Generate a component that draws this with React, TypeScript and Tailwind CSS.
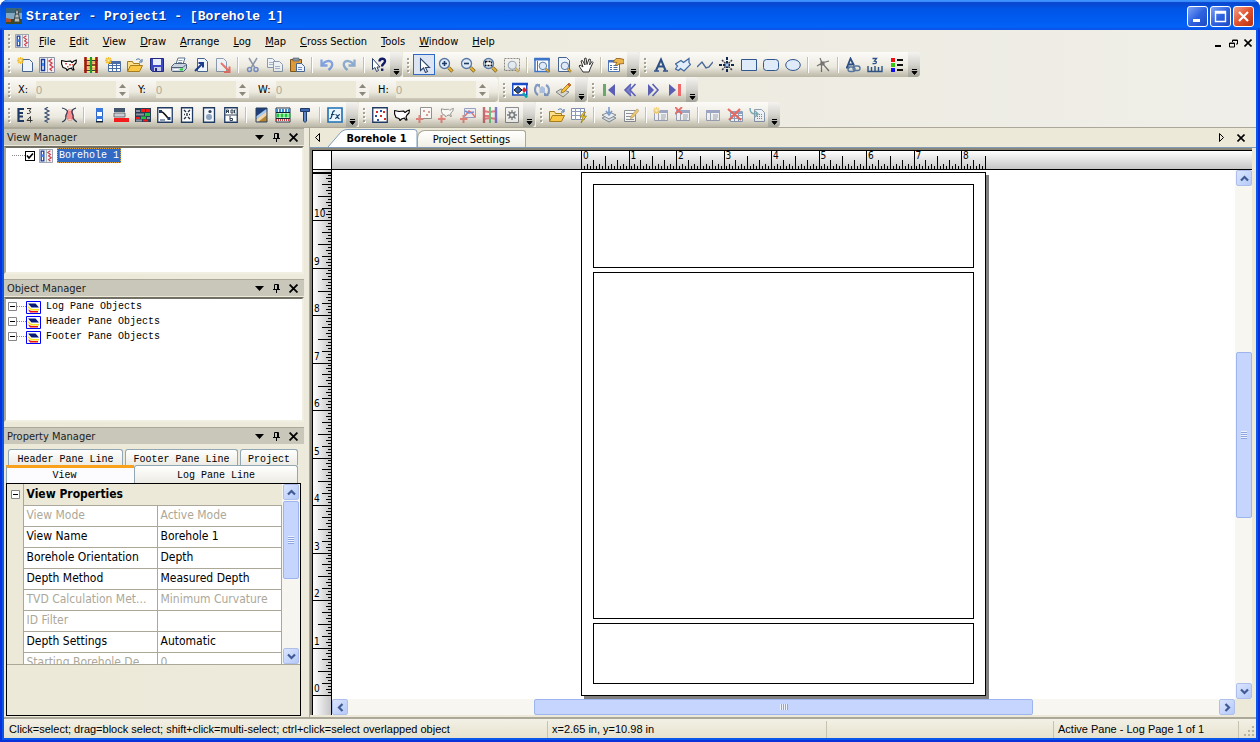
import type { ReactNode } from "react";
import clsx from "clsx";

const NAVY = "#1f3a63";

// pieces shared by several toolbar drawings
const Sheet = ({ x = 3, y = 1, w = 10, h = 13 }) => (
  <path
    d={`M${x}.5 ${y}.5h${w - 3}l3 3v${h - 3}h-${w}z`}
    fill="#eef4fc"
    stroke="#46648f"
  />
);
const Lens = ({ children }: { children?: ReactNode }) => (
  <>
    <path d="M10.5 10.5l4 4" stroke="#8a6a1c" strokeWidth="3.4" />
    <path d="M10.5 10.5l3.6 3.6" stroke="#e9b53b" strokeWidth="1.8" />
    <circle cx="6.5" cy="6.5" r="5" fill="#dfeaf6" stroke="#5878a4" strokeWidth="1.3" />
    {children}
  </>
);
const States = ({ stroke = "#000" }) => (
  <path
    d="M.6 3.5L5 4.500 9.500 4 11 5.500 13 4 15.400 3 15 6 13 8 12 10 13 13H11.500L10.500 11 7.500 12 6 13.500 5 11.500 2 10.500.6 7z"
    fill="#fff"
    stroke={stroke}
    strokeWidth="1.100"
    strokeLinejoin="round"
  />
);
const Plus = () => <path d="M3.500 8v8M0 12h7.500" stroke="#d8463e" strokeWidth="2" />;
const Spark = () => (
  <>
    <path d="M3.500 0v7M0 3.500h7M1 1l5 5M6 1l-5 5" stroke="#f3bd2d" strokeWidth="1.300" />
    <path d="M2.500 2.500h2v2h-2z" fill="#fff3a8" />
  </>
);
const Grid = () => (
  <>
    <path d="M3.500 4.500h12v10h-12z" fill="#fff" stroke="#4a6da5" />
    <path d="M3 6h13" stroke="#4a6da5" strokeWidth="2" />
    <path d="M3 8.500h13M3 11.500h13M7.500 5v10M11.500 5v10" stroke="#4a6da5" />
  </>
);
const Form = () => (
  <>
    <path d="M1.500 3.500h13v10h-13z" fill="#f4f4fa" stroke="#66739a" />
    <path d="M1 4.500h14" stroke="#6674ab" strokeWidth="3" />
    <path d="M5.500 6v8M8 8h5M8 10h5M8 12h4" stroke="#6b7894" />
  </>
);
const Folder = () => (
  <>
    <path d="M.5 14V4.500h5l1 2h6v3" fill="#fbe089" stroke="#a67c1c" />
    <path d="M.5 14.500l3-6h12l-3 6z" fill="#f9c744" stroke="#a67c1c" />
    <path d="M9 3c2-2 4-1 5 1m1-2v3h-3" fill="none" stroke="#3f6ca4" />
  </>
);
const Fence = () => (
  <>
    <path d="M1 1h14v14H1z" fill="#fff27a" />
    <path d="M3 4l4 1 7-1.500v2.500L7 7 3 6.500zM3 11l4-1 7 1v2l-7-1-4 1z" fill="#f2a06c" />
    <path d="M3 8.500h4M9 8h4" stroke="#7a1410" strokeWidth="1.500" />
    <path d="M1 3.500h14M1 13.500h14" stroke="#3a3a3a" />
    <path d="M2.500 0v16M13.500 0v16" stroke="#a01a16" strokeWidth="2.600" />
    <path d="M8 0v16" stroke="#1d9a2e" strokeWidth="2.200" />
  </>
);
const Frame = ({ stroke = NAVY }) => (
  <path d="M.75.75h14.500v14.500H.75z" fill="#fff" stroke={stroke} strokeWidth="1.300" />
);

const icons: Record<string, ReactNode> = {
  new: (
    <>
      <Sheet x={5} y={2} w={10} h={12} />
      <Spark />
    </>
  ),
  borehole: (
    <>
      <path d="M.5.5h15v15H.5z" fill="#f2f2f4" stroke="#8b93a4" />
      <path d="M2.500 2.500h3v11h-3z" fill="#fff" stroke="#163d9a" strokeWidth="1.500" />
      <path d="M3 6h2v3H3z" fill="#4b8af0" />
      <path d="M8.500 1v14" stroke="#9aa" />
      <path d="M13 2l-3 2 3 2-2 2 3 2-3 2 2 2" fill="none" stroke="#d33c4c" strokeWidth="1.300" />
    </>
  ),
  map: (
    <>
      <States />
      <path d="M4 6h2v1.500H4zM8 7h2v1.500H8zM6 9h1.500v1.500H6zM11 7h1.500v1.500H11z" fill="#e4564a" />
    </>
  ),
  section: <Fence />,
  newTable: (
    <>
      <Grid />
      <Spark />
    </>
  ),
  open: <Folder />,
  save: (
    <>
      <path d="M1.500 1.500h13v13h-11l-2-2z" fill="#3d49c4" stroke="#20297e" />
      <path d="M4 2h8v6H4z" fill="#e8eefb" />
      <path d="M5 10h7v4H5z" fill="#c9cdea" />
      <path d="M6 11h2v3H6z" fill="#20297e" />
    </>
  ),
  print: (
    <>
      <path d="M5 7l2-6h7l-2 6z" fill="#fff" stroke="#5b7291" />
      <path d="M7.500 3.500h4M7 5.500h4" stroke="#8797ad" />
      <path d="M.5 9.500l3-3h11l1 1v4l-3 3H1.500l-1-1z" fill="#c9d2de" stroke="#4e5f78" />
      <path d="M1 10.500h11l3-3" fill="none" stroke="#4e5f78" />
      <path d="M9 11.500h3v2H9z" fill="#32cc3c" />
      <path d="M2.500 12.500h5" stroke="#fff" />
    </>
  ),
  import: (
    <>
      <Sheet x={4} />
      <path d="M2 14l7-7M5.500 6h4.500v4.500" fill="none" stroke="#1d3c8a" strokeWidth="2" />
    </>
  ),
  export: (
    <>
      <Sheet x={1} />
      <path d="M6 6l8 8M14.500 9.500V15H9" fill="none" stroke="#e0281e" strokeWidth="2" />
    </>
  ),
  cut: (
    <>
      <path d="M4 1l6 10M12 1L6 11" stroke="#4a5c7c" strokeWidth="1.500" />
      <circle cx="4.500" cy="12.500" r="2" fill="none" stroke="#2f57b4" strokeWidth="1.500" />
      <circle cx="11" cy="12.500" r="2" fill="none" stroke="#2f57b4" strokeWidth="1.500" />
    </>
  ),
  copy: (
    <>
      <Sheet x={0} y={1} w={8} h={9} />
      <Sheet x={6} y={4} w={9} h={10} />
      <path d="M2 5.500h4M2 7.500h4M8 9.500h5M8 11.500h5" stroke="#6f8fc0" />
    </>
  ),
  paste: (
    <>
      <path d="M1.500 2.500h11v12h-11z" fill="#dd9a36" stroke="#7d5418" />
      <path d="M4 1h6v3H4z" fill="#8594a9" stroke="#4f5a6b" strokeWidth=".6" />
      <Sheet x={7} y={6} w={8} h={8} />
      <path d="M9 10.500h4M9 12.500h4" stroke="#6f8fc0" />
    </>
  ),
  undo: (
    <path d="M2.500 2.500v6h6M3.500 7.500c2-3.500 8-5 9.500-1.500 1 3-1 5-3.500 7" fill="none" stroke="#3a6fd8" strokeWidth="2.300" />
  ),
  redo: (
    <path d="M13.500 2.500v6h-6M12.500 7.500C10.500 4 4.500 2.500 3 6c-1 3 1 5 3.500 7" fill="none" stroke="#4a80c0" strokeWidth="2.300" />
  ),
  help: (
    <>
      <path d="M1.500 1.500v11l2.500-2 1.500 4 2-1-1.500-3.500h3z" fill="#fff" stroke="#2a4069" />
      <path d="M8.500 4.500C8.500 1 14 1 14 4s-3 2.500-3 5.500" fill="none" stroke="#111a66" strokeWidth="2.400" />
      <path d="M10 11.500h2.400v2.400H10z" fill="#111a66" />
    </>
  ),
  select: (
    <path d="M4.500 1.500v12l3-2.500 2 4.500 2-1-2-4h4z" fill="#fff" stroke="#2f476f" strokeWidth="1.100" />
  ),
  zoomIn: (
    <Lens>
      <path d="M6.500 4v5M4 6.500h5" stroke={NAVY} strokeWidth="1.600" />
    </Lens>
  ),
  zoomOut: (
    <Lens>
      <path d="M4 6.500h5" stroke={NAVY} strokeWidth="1.600" />
    </Lens>
  ),
  zoomRect: (
    <Lens>
      <path d="M3.500 4.500h6v4h-6z" fill="#fff" stroke="#111" strokeWidth="1.300" strokeDasharray="2 1" />
    </Lens>
  ),
  zoomSelected: (
    <>
      <path d="M.5 1.500h15v12H.5z" fill="none" stroke="#444" strokeDasharray="2 1" />
      <g transform="translate(3 3) scale(.8)">
        <Lens />
      </g>
    </>
  ),
  fitPage: (
    <>
      <path d="M1 1.500h14v13H1z" fill="#fff" stroke="#3c74c8" strokeWidth="1.500" />
      <path d="M0 2.500h16" stroke="#3c74c8" strokeWidth="2" />
      <path d="M3.500 4v10" stroke="#3c74c8" />
      <g transform="translate(4 4) scale(.75)">
        <Lens />
      </g>
    </>
  ),
  actualSize: (
    <>
      <Sheet x={2} y={0} w={11} h={14} />
      <g transform="translate(4 4) scale(.75)">
        <Lens />
      </g>
    </>
  ),
  pan: (
    <path
      d="M5 15l-4-6 1-1 3 2L3 4l1.500-.5L7 8 6.500 1.500 8 1l1 6.500L11 2l1.500.5L11.500 8l2.500-3.500 1 1-3 6.500-1 3z"
      fill="#fff"
      stroke="#333"
      strokeLinejoin="round"
    />
  ),
  properties: (
    <>
      <path d="M.5 3.500h11v11H.5z" fill="#fff" stroke="#4b73b5" />
      <path d="M0 4.500h12" stroke="#4b73b5" strokeWidth="2" />
      <path d="M2 8.500h2M5.500 8.500h4M2 10.500h2M5.500 10.500h4M2 12.500h2M5.500 12.500h4" stroke="#4d6a9d" />
      <path d="M5 5l3-3.500h4l4 1v4l-5 .5-2 1.500-1.500-1 1.500-2z" fill="#eeb54a" stroke="#8a5c14" strokeWidth=".8" />
    </>
  ),
  text: (
    <>
      <path d="M3 13.500L8 2.500l4.500 11M4.500 9.500H11" fill="none" stroke="#2c4f86" strokeWidth="2" />
      <path d="M1 14h5M10 14h5" stroke="#2c4f86" strokeWidth="1.600" />
    </>
  ),
  polygon: (
    <path
      d="M6 3.500l2.500 2L14 1.500v4l1.500 2L9 14l-3.500-2.500-2 2-3-1.500 2-3-2-2z"
      fill="#e2eefb"
      stroke="#3d669f"
      strokeWidth="1.200"
    />
  ),
  polyline: <path d="M0 10l5-5 4 6 3-1 4-5" fill="none" stroke="#4a6799" strokeWidth="1.400" />,
  symbol: (
    <>
      <path d="M8 0v16M0 8h16" stroke="#10284f" strokeWidth="2" strokeDasharray="3 1" />
      <path d="M3 3l10 10M13 3L3 13" stroke="#3a3f48" strokeWidth="1.500" strokeDasharray="2 1" />
      <path d="M6.500 6.500h3v3h-3z" fill="#a9cdf4" />
    </>
  ),
  rect: <path d="M.5 2.500h15v11H.5z" fill="#dfebf9" stroke="#31578e" />,
  roundRect: <rect x=".5" y="2.500" width="15" height="11" rx="3" fill="#dfebf9" stroke="#31578e" />,
  ellipse: <ellipse cx="8" cy="8" rx="7.300" ry="5.500" fill="#dfebf9" stroke="#31578e" />,
  reshape: (
    <path d="M5 1l2 5 7 8M2 9l5-3 7-2M6.500 4v11M6 5h3v3H6z" fill="none" stroke="#222" strokeWidth="1.200" />
  ),
  linkedText: (
    <>
      <path d="M2 10.500l3.500-9 3.500 7M3.500 7.500h4M1 10.500h3.500" fill="none" stroke="#2c4f86" strokeWidth="1.800" />
      <rect x="3" y="10" width="7" height="4.500" rx="2.200" fill="none" stroke="#54759d" strokeWidth="1.400" />
      <rect x="8" y="9" width="7" height="4.500" rx="2.200" fill="none" stroke="#54759d" strokeWidth="1.400" />
    </>
  ),
  scaleBar: (
    <>
      <path d="M1 9v5.500h14V9M4.500 14v-4M8 14V9M11.500 14v-4" fill="none" stroke="#2c5384" strokeWidth="1.400" />
      <path d="M5.500 1.500h4l-2 2.500c3 0 2.500 3.500-2 2.500" fill="none" stroke="#2c5384" strokeWidth="1.300" />
    </>
  ),
  legend: (
    <>
      <path d="M2 1h4v4H2z" fill="#f01010" />
      <path d="M2 6h4v4H2z" fill="#37c612" />
      <path d="M2 11h4v4H2z" fill="#1010ee" />
      <path d="M8 3h6M8 8h6M8 13h6" stroke="#111" strokeWidth="2" />
    </>
  ),
  colorMap: (
    <>
      <path d="M.75 2h14v11h-14z" fill="#fff" stroke="#1a4bc4" strokeWidth="1.500" />
      <path d="M0 2h16" stroke="#1a4bc4" strokeWidth="2.500" />
      <path d="M2 8l4-3.500L10 8l-4 3.500z" fill="#2c5aa2" stroke="#111" />
      <path d="M12 5l3 3-3 3-2-3z" fill="#e02222" />
      <path d="M11 11l4 4.500" stroke="#0aa" strokeWidth="2.500" />
    </>
  ),
  refresh: (
    <>
      <path d="M4 13C0 11 0 4 4 2.500M12 3c4 2 4 9 0 10.500" fill="none" stroke="#3a61a8" strokeWidth="2" />
      <path d="M1 2h5v4zM15 14h-5v-4z" fill="#3a61a8" />
      <path d="M5.500 11V6l2.500-2 3 2v5z" fill="#7fa4dd" />
    </>
  ),
  pencil: (
    <>
      <path d="M0 10l5-3 8 3-6 5z" fill="#d8d8cc" stroke="#7e8084" />
      <path d="M5 11l1-3 7-7 2 2-7 7z" fill="#f3c23c" stroke="#9d6b16" strokeWidth=".8" />
      <path d="M12 2l2 2" stroke="#cf4a35" strokeWidth="1.600" />
    </>
  ),
  first: (
    <>
      <path d="M2 2h3v12H2z" fill="#6aa86c" />
      <path d="M14 2v12L7 8z" fill="#5a5fb4" />
    </>
  ),
  prev: (
    <>
      <path d="M8 2v12L2 8z" fill="#7d82cc" />
      <path d="M8 2L2 8l6 6M12.500 2L7 8l5.500 6" fill="none" stroke="#5a5fb4" strokeWidth="1.600" />
    </>
  ),
  next: (
    <>
      <path d="M3 2v12l6-6z" fill="#5a5fb4" />
      <path d="M7.500 2L13 8l-5.500 6" fill="none" stroke="#5a5fb4" strokeWidth="1.600" />
    </>
  ),
  last: (
    <>
      <path d="M2 2v12l7-6z" fill="#5a5fb4" />
      <path d="M11 2h3v12h-3z" fill="#ee6a6a" />
    </>
  ),
  depthBar: (
    <>
      <path d="M1.500 1v14M1 2h6M1 6h5M1 9.500h5M1 14h6" stroke={NAVY} strokeWidth="2.200" />
      <path d="M10 1.500h4L12 4c3 0 2 3-2 2.500M13.500 15.500V9.500L10 13.500h5.500" fill="none" stroke="#333" />
    </>
  ),
  lineLog: (
    <path d="M9 0L6 2l4 2-4 2 4 2-4 2 4 2-4 2 3 1.500" fill="none" stroke="#3d5173" strokeWidth="1.200" />
  ),
  crossplot: (
    <>
      <path d="M7 3h4l1 5-1 5H7L5 8z" fill="#fff" stroke="#e04040" strokeWidth=".6" />
      <path d="M6.500 5h5M5.500 7h6.500M5.500 9h6.500M6.500 11h5" stroke="#f01c1c" strokeWidth="1.200" />
      <path d="M1 1c8 2 5 5 4 7s2 5-4 7M15 1c-6 2-4 5-3 7s-2 4 4 7" fill="none" stroke="#2c3a55" strokeWidth="1.200" />
    </>
  ),
  zoneBar: (
    <>
      <path d="M5.500 1.500h6v13h-6z" fill="#fff" stroke="#2c5fc0" />
      <path d="M5 1h7v4H5zM5 9h7v3H5z" fill="#3a78dd" />
      <path d="M5 14h7v1.500H5z" fill="#123" />
    </>
  ),
  bars: (
    <>
      <path d="M1 1h11v4H1z" fill="#44556e" />
      <path d="M1 6h11v4H1z" fill="#c9cdd2" stroke="#556" strokeWidth=".8" />
      <path d="M1 11h15v4H1z" fill="#f31b1b" />
    </>
  ),
  lithology: (
    <>
      <path d="M0 1h16v14H0z" fill="#2a3c52" />
      <path d="M6 2h4v3H6zM11 2h4v3h-4zM1 10h4v2H1zM8 12.500h5v2H8z" fill="#f51a1a" />
      <path d="M10 6h5v3h-5zM6 9.500h5v2.500H6z" fill="#22c440" />
      <path d="M1 3h4v2H1zM1 6.500h8v2H1zM1 12.500h6v2H1zM12 10h3v2h-3z" fill="#8a93a0" />
    </>
  ),
  wellConstruction: (
    <>
      <Frame />
      <path d="M3 4.500c5 0 5 5 9 7" fill="none" stroke="#111" strokeWidth="1.500" />
      <path d="M10.500 10h3v3h-3zM2 3h3v3H2zM3 12.500h5v1H3z" fill={NAVY} />
    </>
  ),
  complexText: (
    <>
      <path d="M2.500.75h11v14.500h-11z" fill="#fff" stroke={NAVY} strokeWidth="1.300" />
      <path d="M5 3l2 2M11 3L9 5M8 6v3M5 12l2-2M11 12l-2-2M5 7.500h1M10 7.500h1" stroke="#234" strokeWidth="1.400" />
    </>
  ),
  post: (
    <>
      <path d="M2.500.75h11v14.500h-11z" fill="#f3f6fa" stroke={NAVY} strokeWidth="1.300" />
      <circle cx="9" cy="4.500" r="1.600" fill="#33465f" />
      <circle cx="8" cy="10" r="3" fill="#8ea3bf" />
    </>
  ),
  graphic: (
    <>
      <path d="M1.750.75h12.500v14.500H1.750z" fill="#fff" stroke={NAVY} strokeWidth="1.300" />
      <path d="M3.500 6V3h2v3M3.500 4.500h2M8 3h2v3H8zM12.500 3h-1v3h1M2 8h12M7 9v4.500h2.500v-2H7" fill="none" stroke="#345" />
    </>
  ),
  bitmap: (
    <>
      <path d="M3 1h11v14H3z" fill="#1e3f78" />
      <path d="M3 12L14 3v12H3z" fill="#f0d6a8" />
      <path d="M5 15l9-7v7z" fill="#b5822f" />
      <path d="M3 11l11-8" stroke="#a8c8ee" strokeWidth="2.500" />
      <path d="M3 1h11v14H3z" fill="none" stroke="#27415f" />
    </>
  ),
  pattern: (
    <>
      <path d="M1 1h14v14H1z" fill="#fff" stroke="#234" />
      <path d="M1 3.500h14" stroke="#3b8ad6" strokeWidth="3" strokeDasharray="2 1" />
      <path d="M1.500 8.500h14" stroke="#1ec83c" strokeWidth="4" strokeDasharray="3 1" />
      <path d="M1 13h14" stroke="#c44" strokeWidth="2" strokeDasharray="1 1" />
      <path d="M1 5.500h14M1 11.500h14" stroke="#123" />
    </>
  ),
  well: (
    <>
      <path d="M3.500 1.500h9v3h-9z" fill="#3d69b7" stroke={NAVY} />
      <path d="M6.500 4.500h3V14l-1.500 1.500L6.500 14z" fill="#6289ca" stroke={NAVY} />
    </>
  ),
  fx: (
    <>
      <path d="M1 1h14v14H1z" fill="#eaf5fd" stroke="#1c6fb5" strokeWidth="1.600" />
      <path d="M8 4c-2-1-2.500 2-3 4s-1 4-2.500 3.500M4 7.500h3.500M8.500 7.500c3 0 1 4.500 4 4M13 7.500c-2 0-3 4-5 4" fill="none" stroke="#123d6e" strokeWidth="1.200" />
    </>
  ),
  scatter: (
    <>
      <Frame />
      <path d="M4 4h2v2H4zM11 4h2v2h-2zM8 8h2v2H8zM12 11h2v2h-2z" fill="#d9302a" />
      <path d="M3 8h2v2H3zM8 3h2v2H8zM5 12h2v2H5z" fill="#2d4ea8" />
    </>
  ),
  baseMap: <States />,
  addPost: (
    <>
      <path d="M4.500.5h11v11h-11z" fill="#fff" stroke="#555" />
      <path d="M7 3h2v2H7zM12 4h2v2h-2zM10 7h2v2h-2z" fill="#c86a60" />
      <Plus />
    </>
  ),
  addBase: (
    <>
      <g transform="translate(3 -1) scale(.8)">
        <States stroke="#444" />
      </g>
      <Plus />
    </>
  ),
  addLine: (
    <>
      <path d="M4.500 1.500h11v9h-11z" fill="#e6ecf8" stroke="#5c6fa8" />
      <path d="M5 9l4-5 3 2 3 4" fill="none" stroke="#d52828" strokeWidth="1.400" />
      <path d="M5 4l4 2 5-1" fill="none" stroke="#2b4ac2" strokeWidth="1.400" />
      <Plus />
    </>
  ),
  fence: (
    <>
      <path d="M1 4l6 1 8-1M1 12l7-1 7 1M1 9h6" stroke="#e03038" strokeWidth="2" fill="none" />
      <path d="M14 0v16" stroke="#2a2cb0" strokeWidth="2.400" />
      <path d="M2 0v16" stroke="#a01a28" strokeWidth="2.400" />
      <path d="M8 0v16" stroke="#1c9a40" strokeWidth="2" />
    </>
  ),
  gear: (
    <>
      <path d="M1.500.5h13v15h-13z" fill="#f4f4f4" stroke="#444c58" />
      <circle cx="8" cy="8" r="2.500" fill="none" stroke="#2c3644" strokeWidth="1.600" />
      <path d="M8 3v2M8 11v2M3 8h2M11 8h2M4.500 4.500L6 6M10 10l1.500 1.500M11.500 4.500L10 6M6 10l-1.500 1.500" stroke="#2c3644" strokeWidth="1.300" />
    </>
  ),
  tableBolt: (
    <>
      <path d="M.5 1.500h13v11H.5z" fill="#fff" stroke="#7c8bab" />
      <path d="M0 4.500h14M0 8.500h14M4.500 1v12M9.500 1v12" stroke="#8c9bbb" />
      <path d="M13 5l-4 5h3l-2 6 5.500-7H12l2.500-4z" fill="#f5cf35" stroke="#8c7415" strokeWidth=".7" />
    </>
  ),
  layers: (
    <>
      <path d="M1 11l7-3 7 3-7 4z" fill="#cfd9e6" stroke="#3c4e68" />
      <path d="M1 8l7-3 7 3-7 4z" fill="#e8eef6" stroke="#3c4e68" />
      <path d="M8 0v6M5 4l3 4 3-4" fill="none" stroke="#2b63b8" strokeWidth="1.600" />
    </>
  ),
  editTable: (
    <>
      <path d="M1.500 3.500h11v11h-11z" fill="#fff" stroke="#4c5468" />
      <path d="M3 6.500h8M3 9.500h8M3 12.500h8" stroke="#4c5468" />
      <path d="M8 9l6-7 2 1.500-6 7-2.500 1z" fill="#f0b020" stroke="#8c6c22" strokeWidth=".7" />
    </>
  ),
  newForm: (
    <>
      <Form />
      <Spark />
    </>
  ),
  deleteForm: (
    <>
      <Form />
      <path d="M0 0l7 7M7 0L0 7" stroke="#e2130d" strokeWidth="1.800" />
    </>
  ),
  form: <Form />,
  deleteTable: (
    <>
      <Grid />
      <path d="M1 2l13 11M13 2L2 13" stroke="#e2130d" strokeWidth="2.200" />
    </>
  ),
  loadTable: (
    <>
      <Sheet x={5} y={2} w={10} h={12} />
      <path d="M8 7.500h5M8 9.500h5M8 11.500h5" stroke="#445" strokeDasharray="1 1" />
      <path d="M1 1c0 5 2 6 7 6M6 4l3 3-3 3" fill="none" stroke="#2a7c8c" strokeWidth="1.500" />
    </>
  ),
};

const Icon = ({ name, className }: { name: string; className?: string }) => (
  <svg viewBox="0 0 16 16" className={clsx("size-4 shrink-0", className)} aria-hidden="true">
    {icons[name]}
  </svg>
);

const Grip = () => (
  <svg viewBox="0 0 10 16" className="h-4 w-[10px] shrink-0" aria-hidden="true">
    {[1, 5, 9, 13].map((y) => (
      <g key={y}>
        <rect x="5" y={y + 1} width="2" height="2" fill="#fff" />
        <rect x="4" y={y} width="2" height="2" fill="#a5a294" />
      </g>
    ))}
  </svg>
);

// "|" puts a separator between two buttons, a leading "-" greys the icon out
const Toolbar = ({ items, children, more = true }: { items: string[]; children?: ReactNode; more?: boolean }) => (
  <div
    role="toolbar"
    className="mr-px flex h-[25px] items-center rounded-r bg-linear-to-b from-[#fcfbf8] via-[#ece9df] via-60% to-[#bab7a6]"
  >
    <Grip />
    {children}
    {items.map((item, i) =>
      item === "|" ? (
        <span key={i} className="mx-[3px] h-4 w-[2px] border-r border-r-white bg-[#c3c0b0]" />
      ) : (
        <button
          key={i}
          aria-label={item.replace("-", "")}
          className={clsx(
            "flex h-[21px] w-[22px] items-center justify-center",
            item === "select" && "border border-[#316ac5] bg-[#dde5f3]"
          )}
        >
          <Icon name={item.replace("-", "")} className={clsx(item.startsWith("-") && "opacity-60")} />
        </button>
      )
    )}
    {more ? (
      <button
        aria-label="More buttons"
        className="flex h-full w-3 items-end justify-center rounded-r bg-linear-to-b from-[#f4f3f0] via-[#d4d3cd] to-[#a3a297] pb-px"
      >
        <svg viewBox="0 0 7 8" className="h-2 w-[7px]" aria-hidden="true">
          <path d="M1 1.500h5M1 3.500h5l-2.500 3z" stroke="#000" />
        </svg>
      </button>
    ) : (
      <span className="w-1" />
    )}
  </div>
);

const Field = ({ label }: { label: string }) => (
  <label className="flex items-center pl-1">
    <span className="w-[18px]">{label}:</span>
    <input
      defaultValue="0"
      disabled
      className="h-[17px] w-20 bg-[#ece9d8] font-['Liberation_Sans',sans-serif] text-[#aca899]"
    />
    <span className="flex h-[17px] w-[13px] flex-col items-center justify-center bg-[#f4f2ea]">
      <svg viewBox="0 0 7 12" className="h-3 w-[7px]" aria-hidden="true">
        <path d="M0 4l3.500-4L7 4zM0 8l3.500 4L7 8z" fill="#8b887b" />
      </svg>
    </span>
    <span className="w-[5px]" />
  </label>
);

const menus = ["File", "Edit", "View", "Draw", "Arrange", "Log", "Map", "Cross Section", "Tools", "Window", "Help"];

const CrossMark = ({ className }: { className?: string }) => (
  <svg viewBox="0 0 8 8" className={clsx("size-2", className)} aria-hidden="true">
    <path d="M.5.5l7 7M7.500.5l-7 7" stroke="currentColor" strokeWidth="1.600" />
  </svg>
);

const captionButton =
  "flex size-[21px] items-center justify-center rounded-[3px] border border-white bg-linear-to-br from-[#7fa3f5] via-[#2f62e0] to-[#1d49c4]";

const TitleBar = () => (
  <header className="flex h-[30px] shrink-0 items-center bg-linear-to-b from-[#0b3fc4] via-[#0054e6] via-30% to-[#0364fb] px-[6px] pt-[2px] shadow-[inset_0_2px_1px_#3c92ff,inset_0_-2px_1px_#0046d2]">
    <svg viewBox="0 0 16 16" className="size-4" aria-hidden="true">
      <rect width="16" height="16" fill="#7fa8c4" />
      <path d="M0 0h16v5H0z" fill="#3a6478" />
      <path d="M0 11h16v5H0z" fill="#3c4a26" />
      <path d="M0 10l5 1v3H0z" fill="#b0502c" />
      <path d="M10 2l-2 12h6L12 2zM9 6h4M8.500 10h5" fill="#b8bdb8" stroke="#39424a" />
    </svg>
    <h1 className="ml-1 flex-1 font-['Liberation_Mono',monospace] text-[13px] font-bold text-white [text-shadow:1px_1px_#0a2a80]">
      Strater - Project1 - [Borehole 1]
    </h1>
    <div className="flex gap-[2px]">
      <button aria-label="Minimize" className={captionButton}>
        <svg viewBox="0 0 13 13" className="size-[13px]">
          <path d="M2 9h7v3H2z" fill="#fff" />
        </svg>
      </button>
      <button aria-label="Maximize" className={captionButton}>
        <svg viewBox="0 0 13 13" className="size-[13px]">
          <path d="M1.500 1.500h10v10h-10zM1 3h11" fill="none" stroke="#fff" strokeWidth="1.400" />
        </svg>
      </button>
      <button
        aria-label="Close"
        className="flex size-[21px] items-center justify-center rounded-[3px] border border-white bg-linear-to-br from-[#f0a088] via-[#e0512c] to-[#b8320f]"
      >
        <svg viewBox="0 0 13 13" className="size-[13px]">
          <path d="M2 2l9 9M11 2l-9 9" stroke="#fff" strokeWidth="2.200" />
        </svg>
      </button>
    </div>
  </header>
);

const MenuBar = () => (
  <nav className="flex h-[22px] shrink-0 items-center">
    <Grip />
    <Icon name="borehole" className="mr-2 ml-px size-[14px]" />
    <div className="flex flex-1 gap-[14px] pl-[2px]">
      {menus.map((menu) => (
        <button key={menu}>
          <span className="underline">{menu[0]}</span>
          {menu.slice(1)}
        </button>
      ))}
    </div>
    <div className="flex items-center gap-[6px] pt-1 pr-1">
      <button aria-label="Minimize view">
        <svg viewBox="0 0 9 9" className="size-[9px]">
          <path d="M1 6h6v2H1z" />
        </svg>
      </button>
      <button aria-label="Restore view">
        <svg viewBox="0 0 9 9" className="size-[9px]">
          <path d="M3.500 3V1h5v4H7M.5 4h5v4h-5zM.5 4.500h5M3 1.500h6" fill="none" stroke="#000" />
        </svg>
      </button>
      <button aria-label="Close view">
        <CrossMark />
      </button>
    </div>
  </nav>
);

const PanelHeader = ({ title }: { title: string }) => (
  <div className="flex h-[17px] shrink-0 items-center border-t border-t-[#aca899] bg-[#c9c7ba] pr-[6px] pl-[3px]">
    <h2 className="flex-1 text-[#222]">{title}</h2>
    <div className="flex items-center gap-2">
      <button aria-label={`${title} menu`}>
        <svg viewBox="0 0 9 5" className="h-[5px] w-[9px]">
          <path d="M0 0h9L4.500 5z" />
        </svg>
      </button>
      <button aria-label={`Pin ${title}`}>
        <svg viewBox="0 0 9 9" className="size-[9px]">
          <path d="M2.500 5V.5h4V5M5.500 1v4M1 5.500h7M4.500 6v3" fill="none" stroke="#000" />
        </svg>
      </button>
      <button aria-label={`Close ${title}`}>
        <CrossMark className="size-[9px]" />
      </button>
    </div>
  </div>
);

const Collapse = () => (
  <svg viewBox="0 0 9 9" className="size-[9px] shrink-0" aria-hidden="true">
    <path d="M.5.5h8v8h-8z" fill="#fff" stroke="#858585" />
    <path d="M2 4.500h5" stroke="#000" />
  </svg>
);

const ArrowButton = ({ label, rotate }: { label: string; rotate?: string }) => (
  <button
    aria-label={label}
    className="flex size-4 shrink-0 items-center justify-center rounded-[2px] border border-[#aebfec] bg-linear-to-br from-[#dbe5fe] to-[#b5c9f8]"
  >
    <svg viewBox="0 0 9 9" className={clsx("size-[9px]", rotate)}>
      <path d="M1 6.500L4.500 3 8 6.500" fill="none" stroke="#3f5a94" strokeWidth="2.200" />
    </svg>
  </button>
);

const gripY =
  "h-2 w-[6px] bg-[repeating-linear-gradient(to_bottom,#eef4fe_0_1px,#8ca5e0_1px_2px)]";
const gripX =
  "h-[6px] w-2 bg-[repeating-linear-gradient(to_right,#eef4fe_0_1px,#8ca5e0_1px_2px)]";

const groups = ["Log Pane Objects", "Header Pane Objects", "Footer Pane Objects"];

const properties = [
  { name: "View Mode", value: "Active Mode", disabled: true },
  { name: "View Name", value: "Borehole 1" },
  { name: "Borehole Orientation", value: "Depth" },
  { name: "Depth Method", value: "Measured Depth" },
  { name: "TVD Calculation Met...", value: "Minimum Curvature", disabled: true },
  { name: "ID Filter", value: "", disabled: true },
  { name: "Depth Settings", value: "Automatic" },
  { name: "Starting Borehole De", value: "0", disabled: true },
];

const tab = "rounded-t-[3px] border border-b-0 border-[#91a7b4] bg-linear-to-b from-white to-[#ecebe4]";

const PropertyManager = () => (
  <section className="flex flex-1 flex-col">
    <PanelHeader title="Property Manager" />
    <div className="mt-[5px] flex h-4 gap-[2px] pr-[6px] pl-1 font-['Liberation_Mono',monospace] text-[10px] leading-5">
      <button className={clsx(tab, "w-[115px]")}>Header Pane Line</button>
      <button className={clsx(tab, "w-[113px]")}>Footer Pane Line</button>
      <button className={clsx(tab, "flex-1")}>Project</button>
    </div>
    <div className="flex h-[18px] pr-[6px] pl-[2px] font-['Liberation_Mono',monospace] text-[10px]">
      <button className="w-32 border-t-[3px] border-l border-t-[#f9a11b] border-l-[#91a7b4] bg-[#fcfcfe] pr-3">
        View
      </button>
      <button className={clsx(tab, "flex-1 pt-[2px]")}>Log Pane Line</button>
    </div>
    <div className="mr-[3px] mb-px ml-[2px] flex-1 border border-black text-[12px]">
      <div className="flex h-[181px] border-b border-b-[#aca899] bg-[#f6f5ef]">
        <div className="flex-1 overflow-hidden">
          <table className="w-full table-fixed border-collapse">
            <colgroup>
              <col className="w-4" />
              <col className="w-[134px]" />
              <col />
            </colgroup>
            <tbody>
              <tr className="h-[21px] bg-[#ece9d8]">
                <td className="border-r border-r-[#aca899]">
                  <button aria-label="Collapse View Properties" className="ml-1 block">
                    <Collapse />
                  </button>
                </td>
                <th colSpan={2} className="pl-[3px] text-left font-bold">
                  View Properties
                </th>
              </tr>
              {properties.map((row) => (
                <tr key={row.name} className={clsx("h-[21px]", row.disabled && "text-[#aca899]")}>
                  <td className="border-r border-r-[#aca899] bg-[#ece9d8]" />
                  <td className="border border-[#aca899] bg-white pl-[3px] whitespace-nowrap">{row.name}</td>
                  <td className="border border-[#aca899] bg-white pl-[3px] whitespace-nowrap">{row.value}</td>
                </tr>
              ))}
            </tbody>
          </table>
        </div>
        <div className="flex w-[18px] flex-col px-px">
          <ArrowButton label="Scroll properties up" />
          <div className="mt-px flex h-[78px] items-center justify-center rounded-[2px] border border-[#9db4ee] bg-[#c6d5fd]">
            <span className={gripY} />
          </div>
          <span className="flex-1" />
          <ArrowButton label="Scroll properties down" rotate="rotate-180" />
        </div>
      </div>
    </div>
  </section>
);

const Sidebar = () => (
  <aside className="flex w-[300px] shrink-0 flex-col">
    <section className="mb-[5px]">
      <PanelHeader title="View Manager" />
      <div className="mt-px h-32 border-2 border-t-[#716f64] border-r-[#f1efe2] border-b-[#f1efe2] border-l-[#aca899] bg-white">
        <label className="flex h-[15px] items-center pl-[6px] font-['Liberation_Mono',monospace] text-[10px]">
          <span className="w-[13px] border-t border-dotted border-[#888]" />
          <span className="relative flex size-[10px] items-center justify-center border border-black bg-white">
            <input type="checkbox" defaultChecked className="absolute inset-0 appearance-none" />
            <svg viewBox="0 0 8 8" className="size-2" aria-hidden="true">
              <path d="M1 3.500L3 6l4-4.500" fill="none" stroke="#000" strokeWidth="1.600" />
            </svg>
          </span>
          <Icon name="borehole" className="mr-1 ml-1 size-[14px]" />
          <span className="h-[15px] border border-dotted border-[#e0a040] bg-[#316ac5] px-px leading-[13px] text-white">
            Borehole 1
          </span>
        </label>
      </div>
    </section>

    <section className="mb-[5px]">
      <PanelHeader title="Object Manager" />
      <ul className="mt-px h-[125px] border-2 border-t-[#716f64] border-r-[#f1efe2] border-b-[#f1efe2] border-l-[#aca899] bg-white font-['Liberation_Mono',monospace] text-[10px]">
        {groups.map((group) => (
          <li key={group} className="flex h-[15px] items-center pl-[2px]">
            <Collapse />
            <span className="w-[9px] border-t border-dotted border-[#888]" />
            <svg viewBox="0 0 15 13" className="mt-[2px] mr-[5px] h-[13px] w-[15px]" aria-hidden="true">
              <path d="M.5.5h14v12H.5z" fill="#fff" stroke="#00f" />
              <path d="M2 2.500h7.500L13 6.500H5.500z" fill="#0a1a78" />
              <path d="M2 5l3.500 3H13v1.500H5.500L2 7z" fill="#fde11a" />
              <path d="M2 8.500l3.500 1.500H12v1.500H4z" fill="#e81010" />
            </svg>
            {group}
          </li>
        ))}
      </ul>
    </section>

    <PropertyManager />
  </aside>
);

const INCH = 47.5;
const PAGE_W = 405;
const PAGE_H = 523;

// sixteenth-inch graduations; the mark grows with the coarseness of the step
const tickLength = (i: number) =>
  i % 16 === 0 ? 19 : i % 8 === 0 ? 13 : i % 4 === 0 ? 9 : i % 2 === 0 ? 5 : 3;

const TopRuler = () => (
  <div className="flex h-5 border-y border-y-black bg-linear-to-b from-white to-[#c6c6c6] pr-[17px]">
    <svg viewBox="0 0 405 18" className="mx-auto h-[18px] w-[405px] text-[10px]">
      {Array.from({ length: 137 }, (_, i) => {
        const x = Math.round((i * INCH) / 16);
        const length = i === 136 ? 13 : tickLength(i);
        return <rect key={i} x={Math.min(x, PAGE_W - 1)} y={18 - length} width="1" height={length} />;
      })}
      {Array.from({ length: 9 }, (_, n) => (
        <text key={n} x={n * INCH + 2} y="8">
          {n}
        </text>
      ))}
    </svg>
  </div>
);

const SideRuler = () => (
  <div className="w-5 shrink-0 border-x border-x-black bg-linear-to-r from-white to-[#c6c6c6] pt-[2px]">
    <svg viewBox="0 0 18 524" className="h-[524px] w-[18px] text-[10px]">
      <rect width="18" height="2" />
      {Array.from({ length: 176 }, (_, i) => {
        const length = Math.min(tickLength(i), 18);
        return (
          <rect key={i} x={18 - length} y={Math.round(PAGE_H - (i * INCH) / 16)} width={length} height="1" />
        );
      })}
      {Array.from({ length: 11 }, (_, n) => (
        <text key={n} x="1" y={PAGE_H - n * INCH - 3}>
          {n}
        </text>
      ))}
    </svg>
  </div>
);

const LogView = () => (
  <main className="flex min-w-0 flex-1 flex-col border-l border-l-[#aca899] bg-[#ece9d8]">
    <div className="flex h-5 items-end border-b border-b-[#7f9db9]">
      <button aria-label="Previous tab" className="mr-2 ml-1 self-center">
        <svg viewBox="0 0 6 9" className="h-[9px] w-[6px]">
          <path d="M5.500.5v8l-4-4z" fill="none" stroke="#000" />
        </svg>
      </button>
      <button className="relative isolate h-[18px] w-[89px] pl-2 font-bold">
        <svg viewBox="0 0 90 18" className="absolute inset-0 -z-10 h-[18px] w-[90px]" aria-hidden="true">
          <path d="M0 18L13 3q3-2.500 6-2.500h67q3 0 3 3V18z" fill="#fff" />
          <path d="M0 18L13 3q3-2.500 6-2.500h67q3 0 3 3V18" fill="none" stroke="#7f9db9" />
        </svg>
        Borehole 1
      </button>
      <button className="h-[17px] w-[109px] rounded-tl-lg rounded-tr-[3px] border border-b-0 border-[#aca899] bg-linear-to-b from-white to-[#f1efe4]">
        Project Settings
      </button>
      <div className="ml-auto flex items-center gap-3 self-center pr-[11px]">
        <button aria-label="Next tab">
          <svg viewBox="0 0 6 9" className="h-[9px] w-[6px]">
            <path d="M.5.5v8l4-4z" fill="none" stroke="#000" />
          </svg>
        </button>
        <button aria-label="Close tab">
          <CrossMark />
        </button>
      </div>
    </div>

    <div className="mr-1 mb-[2px] flex flex-1 border-t-2 border-l-2 border-[#8a8678]">
      <div className="flex flex-col">
        <div className="h-5 w-5 border border-black bg-white" />
        <div className="flex flex-1 bg-white">
          <SideRuler />
        </div>
      </div>
      <div className="flex min-w-0 flex-1 flex-col">
        <TopRuler />
        <div className="flex flex-1">
          <div className="flex-1 bg-white pt-[2px]">
            <div className="mx-auto flex h-[524px] w-[405px] flex-col gap-1 border border-black bg-white p-[11px] shadow-[3px_3px_#808080]">
              <div className="h-[84px] border border-black" />
              <div className="flex-1 border border-black" />
              <div className="h-[61px] border border-black" />
            </div>
          </div>
          <div className="flex w-[17px] flex-col bg-[#f7f6f0] pl-px">
            <ArrowButton label="Scroll up" />
            <span className="flex-1" />
            <div className="flex h-[166px] items-center justify-center rounded-[2px] border border-[#9db4ee] bg-[#c6d5fd]">
              <span className={gripY} />
            </div>
            <span className="flex-1" />
            <ArrowButton label="Scroll down" rotate="rotate-180" />
          </div>
        </div>
        <div className="flex h-4 pr-[17px]">
          <div className="flex flex-1 bg-[#f7f6f0]">
            <ArrowButton label="Scroll left" rotate="-rotate-90" />
            <span className="flex-1" />
            <div className="flex w-[499px] items-center justify-center rounded-[2px] border border-[#9db4ee] bg-[#c6d5fd]">
              <span className={gripX} />
            </div>
            <span className="flex-1" />
            <ArrowButton label="Scroll right" rotate="rotate-90" />
          </div>
        </div>
      </div>
    </div>
  </main>
);

const StatusBar = () => (
  <footer className="flex h-[21px] shrink-0 items-center border-t-2 border-t-[#aca899] bg-linear-to-b from-[#f3f1e6] to-[#e6e2cf] pt-[2px] font-['Liberation_Sans',sans-serif] leading-[17px]">
    <p className="flex-1 pl-[5px]">
      Click=select; drag=block select; shift+click=multi-select; ctrl+click=select overlapped object
    </p>
    <p className="w-[279px] border-l border-l-[#c5c2b0] pl-1">x=2.65 in, y=10.98 in</p>
    <p className="h-[17px] w-[227px] border-l border-l-[#c5c2b0]" />
    <p className="w-[185px] border-l border-l-[#c5c2b0] pl-1">Active Pane - Log Page 1 of 1</p>
    <span className="flex h-[17px] w-[18px] items-end justify-end border-l border-l-[#c5c2b0]">
      <svg viewBox="0 0 12 12" className="size-3" aria-hidden="true">
        <path d="M8 0h2v2H8zM4 4h2v2H4zM8 4h2v2H8zM0 8h2v2H0zM4 8h2v2H4zM8 8h2v2H8z" fill="#b8b4a2" />
      </svg>
    </span>
  </footer>
);

export default function App() {
  return (
    <div className="flex min-h-screen flex-col overflow-hidden rounded-t-lg bg-[#0831d9] font-['DejaVu_Sans_Condensed','DejaVu_Sans',sans-serif] text-[11px] leading-[15px] text-black">
      <TitleBar />
      <div className="mx-1 mb-1 flex flex-1 flex-col bg-linear-to-r from-[#ece9d8] to-[#efeee8] shadow-[0_0_0_2px_#0a55ea]">
        <MenuBar />
        <div className="flex">
          <Toolbar
            items={[
              "new", "borehole", "map", "section", "newTable", "open", "save", "print", "import", "-export", "|",
              "-cut", "-copy", "paste", "|", "-undo", "-redo", "|", "help",
            ]}
          />
          <Toolbar
            items={[
              "select", "zoomIn", "zoomOut", "zoomRect", "-zoomSelected", "|",
              "fitPage", "actualSize", "pan", "|", "properties",
            ]}
          />
          <Toolbar
            items={[
              "text", "polygon", "polyline", "symbol", "rect", "roundRect", "ellipse", "|",
              "-reshape", "|", "linkedText", "scaleBar", "legend",
            ]}
          />
        </div>
        <div className="flex">
          <Toolbar items={[]} more={false}>
            <Field label="X" />
            <Field label="Y" />
            <Field label="W" />
            <Field label="H" />
          </Toolbar>
          <Toolbar items={["colorMap", "-refresh", "pencil"]} />
          <Toolbar items={["first", "prev", "next", "last"]} />
        </div>
        <div className="flex border-b border-b-[#aca899]">
          <Toolbar
            items={[
              "depthBar", "lineLog", "crossplot", "|",
              "zoneBar", "bars", "lithology", "wellConstruction", "complexText", "post", "graphic", "|",
              "bitmap", "pattern", "well", "|", "fx",
            ]}
          />
          <Toolbar items={["scatter", "baseMap", "-addPost", "-addBase", "-addLine", "-fence", "-gear"]} />
          <Toolbar
            items={[
              "open", "tableBolt", "|", "-layers", "-editTable", "|",
              "-newForm", "-deleteForm", "|", "-form", "-deleteTable", "-loadTable",
            ]}
          />
        </div>
        <div className="flex flex-1 gap-[5px]">
          <Sidebar />
          <LogView />
        </div>
        <StatusBar />
      </div>
    </div>
  );
}
